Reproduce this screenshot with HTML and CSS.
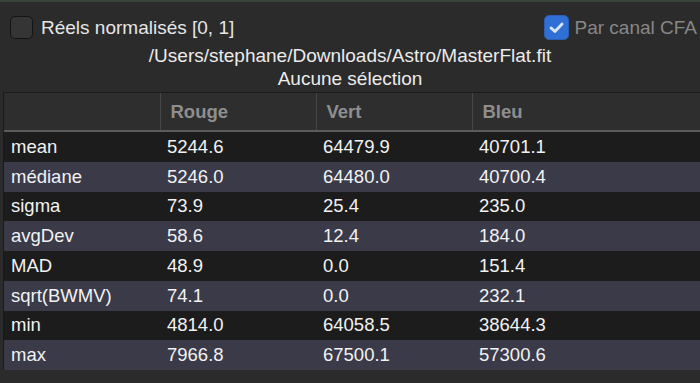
FILE: index.html
```html
<!DOCTYPE html>
<html lang="fr">

<head>
    <meta charset="UTF-8">
    <title>Statistiques</title>
    <link rel="stylesheet" href="styles.css">
</head>

<body>

    <section class="panel">

        <div class="options">
            <label class="check">
                <span class="box"></span>
                <span>Réels normalisés [0, 1]</span>
            </label>
            <label class="check disabled">
                <span class="box on">
                    <svg viewBox="0 0 24 24" width="19" height="19">
                        <path d="M5 12.5 L10 17 L19 7.5" fill="none" stroke="#d8e4f8" stroke-width="3.6" stroke-linecap="round" stroke-linejoin="round" />
                    </svg>
                </span>
                <span>Par canal CFA</span>
            </label>
        </div>

        <p class="chemin">/Users/stephane/Downloads/Astro/MasterFlat.fit</p>
        <p class="selection">Aucune sélection</p>

        <div class="tableau">
            <table>
                <thead>
                    <tr>
                        <th></th>
                        <th>Rouge</th>
                        <th>Vert</th>
                        <th>Bleu</th>
                    </tr>
                </thead>
                <tbody id="corps">
                </tbody>
            </table>
        </div>

    </section>

    <script>
        const stats = [
            ["mean", "5244.6", "64479.9", "40701.1"],
            ["médiane", "5246.0", "64480.0", "40700.4"],
            ["sigma", "73.9", "25.4", "235.0"],
            ["avgDev", "58.6", "12.4", "184.0"],
            ["MAD", "48.9", "0.0", "151.4"],
            ["sqrt(BWMV)", "74.1", "0.0", "232.1"],
            ["min", "4814.0", "64058.5", "38644.3"],
            ["max", "7966.8", "67500.1", "57300.6"]
        ];

        const corps = document.querySelector("#corps");

        stats.forEach(ligne => {
            const tr = document.createElement("tr");
            ligne.forEach(val => {
                const td = document.createElement("td");
                td.textContent = val;
                tr.appendChild(td);
            });
            corps.appendChild(tr);
        });
    </script>
</body>

</html>
```

FILE: styles.css
```css
html,
body {
    margin: 0;
    height: 100%;
    background-color: #2b2b2b;
    overflow: hidden;
}

body {
    font-family: "Liberation Sans", Arial, sans-serif;
    color: #e6e6e6;
    border-top: 2px solid #38433a;
    box-sizing: border-box;
}

.panel {
    display: flex;
    flex-direction: column;
}

.options {
    display: flex;
    justify-content: space-between;
    align-items: center;
    padding: 14px 3px 0 10px;
    height: 23px;
}

.check {
    display: flex;
    align-items: center;
    gap: 8px;
    font-size: 19px;
    white-space: nowrap;
}

.disabled {
    color: #878787;
    gap: 6px;
}

.box {
    width: 21px;
    height: 21px;
    border: 1px solid #141414;
    border-radius: 5px;
    background-color: #353535;
    display: flex;
    align-items: center;
    justify-content: center;
}

.box.on {
    width: 23px;
    height: 23px;
    background-color: #2f6fd6;
    border-color: #2a5fb5;
}

.chemin,
.selection {
    margin: 0;
    text-align: center;
    font-size: 19px;
    line-height: 23px;
    color: #ececec;
}

.chemin {
    margin-top: 5px;
}

.tableau {
    margin: 2px 0 0 3px;
    border-top: 1px solid #1a1a1a;
    border-left: 1px solid #1a1a1a;
}

table {
    width: 100%;
    border-collapse: collapse;
    font-size: 18.5px;
}

th {
    height: 37px;
    text-align: left;
    padding: 0 0 0 10px;
    color: #8e8e8e;
    background-color: #2e2e2e;
    border-right: 1px solid #474747;
    border-bottom: 2px solid #5c5c5c;
}

th:last-child {
    border-right: none;
}

th:nth-child(1),
th:nth-child(2),
th:nth-child(3) {
    width: 156px;
    box-sizing: border-box;
}

td {
    height: 29.75px;
    padding: 0 0 0 7px;
    color: #f2f2f2;
    background-color: #1c1c1c;
}

tbody tr:nth-child(even) td {
    background-color: #3a3a49;
}
```
